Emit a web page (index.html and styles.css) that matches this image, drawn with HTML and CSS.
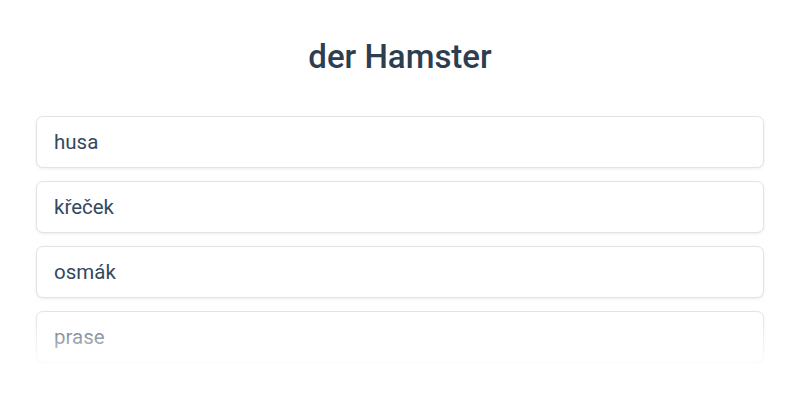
FILE: index.html
```html
<!DOCTYPE html>
<html lang="de">
<head>
<meta charset="utf-8">
<link rel="stylesheet" href="styles.css">
</head>
<body>
<main class="quiz">
  <h1 class="word">der Hamster</h1>
  <div class="options">
    <button class="option">husa</button>
    <button class="option">křeček</button>
    <button class="option">osmák</button>
    <button class="option">prase</button>
    <div class="fade"></div>
  </div>
</main>
</body>
</html>
```

FILE: styles.css
```css
html, body {
  margin: 0;
  padding: 0;
  background: #ffffff;
}
body {
  font-family: Roboto, "Noto Sans", "Liberation Sans", sans-serif;
  color: #2c3e50;
}
.quiz {
  padding: 0 36px;
}
.word {
  margin: 37px 0 39px;
  font-size: 33px;
  line-height: 40px;
  font-weight: 500;
  text-align: center;
  color: #2c3e50;
}
.options {
  position: relative;
  display: flex;
  flex-direction: column;
  gap: 13px;
}
.option {
  display: block;
  width: 100%;
  text-align: left;
  font-family: inherit;
  font-size: 20.5px;
  line-height: 50px;
  padding: 0 17px;
  color: #34495e;
  background: #ffffff;
  border: 1px solid #e3e3e3;
  border-radius: 7px;
  box-shadow: 0 1px 3px rgba(0, 0, 0, 0.08);
}
.fade {
  position: absolute;
  left: -10px;
  right: -10px;
  bottom: -6px;
  height: 56px;
  background: linear-gradient(to bottom, rgba(255,255,255,0.05), rgba(255,255,255,0.97));
  pointer-events: none;
}
```
